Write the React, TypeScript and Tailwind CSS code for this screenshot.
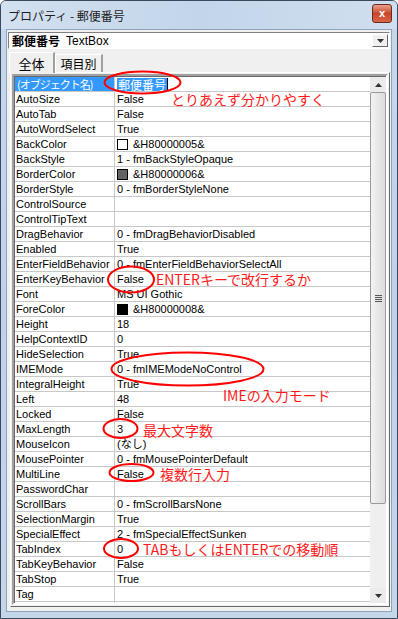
import React from "react";

type Swatch = "white" | "gray" | "black";

// プロパティ一覧
const rows: { name: string; value: string; swatch?: Swatch }[] = [
  { name: "AutoSize", value: "False" },
  { name: "AutoTab", value: "False" },
  { name: "AutoWordSelect", value: "True" },
  { name: "BackColor", value: "&H80000005&", swatch: "white" },
  { name: "BackStyle", value: "1 - fmBackStyleOpaque" },
  { name: "BorderColor", value: "&H80000006&", swatch: "gray" },
  { name: "BorderStyle", value: "0 - fmBorderStyleNone" },
  { name: "ControlSource", value: "" },
  { name: "ControlTipText", value: "" },
  { name: "DragBehavior", value: "0 - fmDragBehaviorDisabled" },
  { name: "Enabled", value: "True" },
  { name: "EnterFieldBehavior", value: "0 - fmEnterFieldBehaviorSelectAll" },
  { name: "EnterKeyBehavior", value: "False" },
  { name: "Font", value: "MS UI Gothic" },
  { name: "ForeColor", value: "&H80000008&", swatch: "black" },
  { name: "Height", value: "18" },
  { name: "HelpContextID", value: "0" },
  { name: "HideSelection", value: "True" },
  { name: "IMEMode", value: "0 - fmIMEModeNoControl" },
  { name: "IntegralHeight", value: "True" },
  { name: "Left", value: "48" },
  { name: "Locked", value: "False" },
  { name: "MaxLength", value: "3" },
  { name: "MouseIcon", value: "(なし)" },
  { name: "MousePointer", value: "0 - fmMousePointerDefault" },
  { name: "MultiLine", value: "False" },
  { name: "PasswordChar", value: "" },
  { name: "ScrollBars", value: "0 - fmScrollBarsNone" },
  { name: "SelectionMargin", value: "True" },
  { name: "SpecialEffect", value: "2 - fmSpecialEffectSunken" },
  { name: "TabIndex", value: "0" },
  { name: "TabKeyBehavior", value: "False" },
  { name: "TabStop", value: "True" },
  { name: "Tag", value: "" },
  { name: "", value: "" },
];

const swatchClass: Record<Swatch, string> = {
  white: "bg-white",
  gray: "bg-[#646464]",
  black: "bg-black",
};

// 赤い注釈
const notes = [
  { text: "とりあえず分かりやすく", cls: "left-[170px] top-[90px]" },
  { text: "ENTERキーで改行するか", cls: "left-[155px] top-[270px]" },
  { text: "IMEの入力モード", cls: "left-[222px] top-[386px]" },
  { text: "最大文字数", cls: "left-[142px] top-[421px]" },
  { text: "複数行入力", cls: "left-[159px] top-[465px]" },
  { text: "TABもしくはENTERでの移動順", cls: "left-[142px] top-[540px]" },
];

const ellipses = [
  { cx: 141.5, cy: 81.5, rx: 38, ry: 11 },
  { cx: 130, cy: 278.5, rx: 23, ry: 13 },
  { cx: 186.5, cy: 368, rx: 76, ry: 16.5 },
  { cx: 119.5, cy: 427.5, rx: 17, ry: 9.5 },
  { cx: 130.5, cy: 471.5, rx: 22, ry: 8.5 },
  { cx: 120, cy: 547.5, rx: 17, ry: 9.5 },
];

const font = "font-['Liberation_Sans','Noto_Sans_CJK_JP',sans-serif]";

function Arrow({ up }: { up?: boolean }) {
  return (
    <svg width="7" height="4" viewBox="0 0 7 4">
      <polygon points={up ? "0,4 7,4 3.5,0" : "0,0 7,0 3.5,4"} fill="#333" />
    </svg>
  );
}

export default function App() {
  return (
    <div className={`relative w-[398px] h-[619px] overflow-hidden border border-[#3a4a5c] rounded-t-[6px] bg-gradient-to-b from-[#c6d8ec] via-[#bfd2e8] to-[#c4d6ea] ${font} text-[11px] text-black`}>
      {/* タイトルバー */}
      <div className="h-[28px] flex items-center justify-between pl-[7px] pr-[5px] bg-gradient-to-r from-[#d3e1f0] via-[#c2d5ea] to-[#d0dfef]">
        <span className="text-[12px] text-[#1e1e1e] font-['Noto_Sans_CJK_JP',sans-serif] leading-none mt-[1px]">
          プロパティ - 郵便番号
        </span>
        <div className="w-[20px] h-[19px] -mt-[4px] rounded-[3px] border border-[#6b2a1c] bg-gradient-to-b from-[#e9a08c] via-[#c8452a] to-[#d9664a] flex items-center justify-center">
          <span className="text-white text-[11px] font-bold leading-none">x</span>
        </div>
      </div>

      {/* クライアント領域 */}
      <div className="mx-[5px] h-[583px] bg-[#f0f0f0] border border-[#8fa3bb] flex flex-col px-[1px]">
        {/* オブジェクト選択 */}
        <div className="mt-[2px] h-[17px] bg-white border-t border-l border-[#808080] border-b border-r border-b-white border-r-white flex items-center">
          <span className="pl-[3px] text-[12px] font-bold font-['Noto_Sans_CJK_JP',sans-serif] leading-none">郵便番号</span>
          <span className="pl-[6px] text-[12px] leading-none">TextBox</span>
          <div className="ml-auto mr-[1px] w-[16px] h-[13px] bg-[#f0f0f0] border border-t-white border-l-white border-b-[#696969] border-r-[#696969] flex items-center justify-center">
            <Arrow />
          </div>
        </div>

        {/* タブ */}
        <div className="flex items-end h-[23px] pl-[1px]">
          <div className="h-[21px] w-[46px] bg-[#f0f0f0] border-t border-l border-white border-r-2 border-r-[#a0a0a0] flex items-center justify-center text-[13px] font-['Noto_Sans_CJK_JP',sans-serif] leading-none relative top-[1px]">
            全体
          </div>
          <div className="h-[18px] w-[48px] bg-[#f0f0f0] border-t border-l border-white border-r-2 border-r-[#a0a0a0] flex items-center justify-center text-[12px] font-['Noto_Sans_CJK_JP',sans-serif] leading-none">
            項目別
          </div>
        </div>

        {/* プロパティグリッド */}
        <div className="ml-[2px] h-[535px] border-t border-l border-white border-b border-r border-b-[#696969] border-r-[#696969] p-[1px]">
          <div className="h-full border-2 border-t-[#a0a0a0] border-l-[#a0a0a0] border-b-white border-r-white bg-white flex">
            <div className="flex-1 overflow-hidden border-l border-t border-[#696969]">
              <div className="grid grid-cols-[100px_1fr] h-[15px] border-b border-[#c8c8c8]">
                <div className="bg-[#3399ff] text-white pl-[2px] leading-[14px] text-[11px] tracking-[-1px] whitespace-nowrap overflow-hidden font-['Noto_Sans_CJK_JP',sans-serif] border-r border-[#c8c8c8]">
                  (オブジェクト名)
                </div>
                <div className="pl-[2px] flex items-center">
                  <span className="bg-[#3399ff] text-white text-[12px] leading-[13px] font-['Noto_Sans_CJK_JP',sans-serif] px-[1px]">郵便番号</span>
                  <span className="w-[1px] h-[12px] bg-black" />
                </div>
              </div>
              {rows.map((r, i) => (
                <div key={i} className="grid grid-cols-[100px_1fr] h-[15px] border-b border-[#c8c8c8]">
                  <div className="pl-[1px] leading-[14px] whitespace-nowrap overflow-hidden border-r border-[#c8c8c8]">
                    {r.name}
                  </div>
                  <div className="pl-[2px] leading-[14px] whitespace-nowrap overflow-hidden flex items-center">
                    {r.swatch && (
                      <span className={`inline-block w-[11px] h-[11px] border border-black mr-[5px] ${swatchClass[r.swatch]}`} />
                    )}
                    <span>{r.value}</span>
                  </div>
                </div>
              ))}
            </div>

            {/* スクロールバー */}
            <div className="w-[16px] bg-[#ebebeb] border-t border-[#696969] flex flex-col">
              <div className="h-[15px] flex items-center justify-center">
                <Arrow up />
              </div>
              <div className="h-[412px] rounded-[2px] border border-[#9a9a9a] bg-gradient-to-r from-[#f3f3f3] to-[#dcdcdc] flex items-center justify-center">
                <div className="flex flex-col gap-[1px]">
                  <div className="w-[7px] h-[1px] bg-[#555]" />
                  <div className="w-[7px] h-[1px] bg-[#555]" />
                  <div className="w-[7px] h-[1px] bg-[#555]" />
                  <div className="w-[7px] h-[1px] bg-[#555]" />
                </div>
              </div>
              <div className="flex-1 bg-[#efefef]" />
              <div className="h-[15px] flex items-center justify-center">
                <Arrow />
              </div>
            </div>
          </div>
        </div>
      </div>

      {/* 注釈 */}
      <svg className="absolute inset-0 pointer-events-none" width="398" height="619">
        {ellipses.map((e, i) => (
          <ellipse key={i} cx={e.cx} cy={e.cy} rx={e.rx} ry={e.ry} fill="none" stroke="#ff0000" strokeWidth="2" />
        ))}
      </svg>
      {notes.map((n) => (
        <span
          key={n.text}
          className={`absolute ${n.cls} text-[14px] leading-[16px] text-[#ff1a1a] whitespace-nowrap font-['Noto_Sans_CJK_JP',sans-serif]`}
        >
          {n.text}
        </span>
      ))}
    </div>
  );
}
